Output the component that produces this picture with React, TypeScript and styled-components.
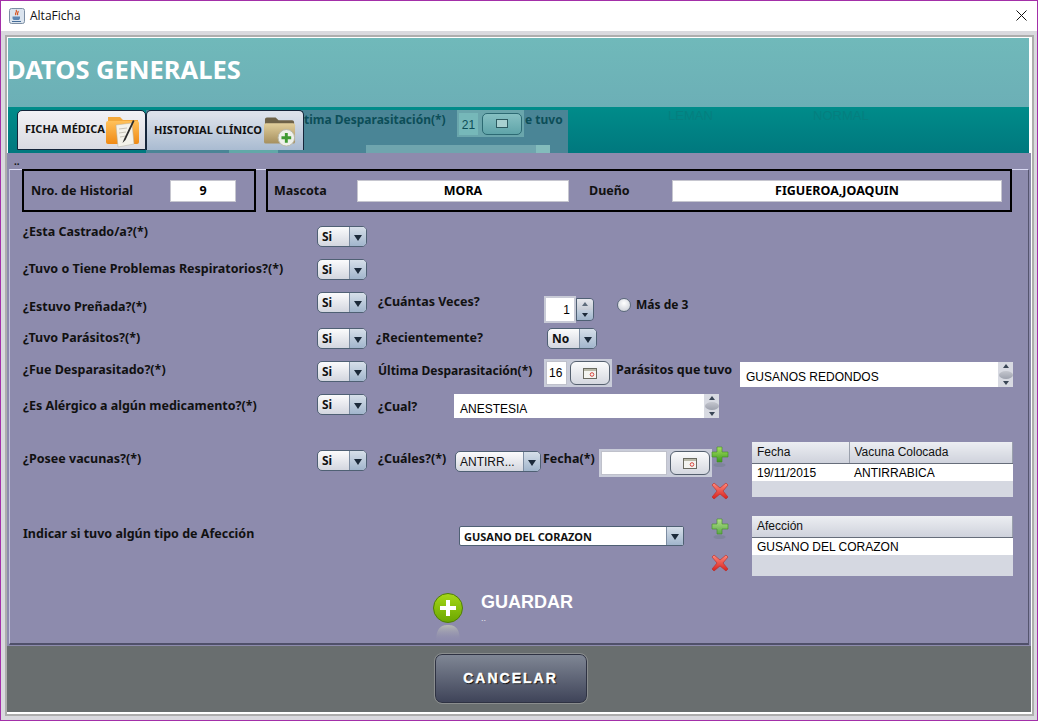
import React from 'react';
import styled, { createGlobalStyle } from 'styled-components';

const GlobalStyle = createGlobalStyle`
  html, body {
    margin: 0;
    padding: 0;
    width: 1038px;
    height: 721px;
    overflow: hidden;
    background: #fff;
  }
  * {
    box-sizing: border-box;
  }
`;

const LABEL_FONT = `"Noto Sans", "DejaVu Sans", sans-serif`;
const FIELD_FONT = `"Liberation Sans", Arial, sans-serif`;

const Win = styled.div`
  width: 1038px;
  height: 721px;
  display: flex;
  flex-direction: column;
  border: 1px solid #a32fa8;
  background: #fff;
`;

const TitleBar = styled.div`
  height: 30px;
  flex: none;
  display: flex;
  align-items: center;
  padding: 0 10px 1px 8px;
  gap: 5px;
  background: #fff;
  font: 12px "Open Sans", sans-serif;
  color: #111;
`;

const TitleText = styled.span`
  flex: 1;
`;

const Frame = styled.div`
  flex: 1;
  display: flex;
  flex-direction: column;
  padding: 4px 3px 4px 4px;
  background: #d9d9de;
`;

const FrameInner = styled.div`
  flex: 1;
  display: flex;
  flex-direction: column;
  border: 2px solid #adadad;
  background: #fff;
  padding: 1px 1px 2px 1px;
`;

const Banner = styled.div`
  height: 69px;
  flex: none;
  display: flex;
  align-items: center;
  margin-right: 2px;
  padding-bottom: 8px;
  background: linear-gradient(#70b9ba, #6cafb6);
`;

const BannerTitle = styled.h1`
  margin: 0 0 0 -1px;
  font: bold 25.5px ${LABEL_FONT};
  color: #fff;
`;

const Strip = styled.div`
  position: relative;
  height: 46px;
  flex: none;
  display: flex;
  align-items: flex-start;
  margin-right: 2px;
  padding: 3px 0 0 9px;
  overflow: hidden;
  background: linear-gradient(#008c8a, #00787e);
`;

const GhostPanel = styled.div`
  position: absolute;
  left: 138px;
  top: 3px;
  width: 422px;
  height: 43px;
  background: #4a8596;
`;

const GhostLabel = styled.span<{ $x: number; $y: number }>`
  position: absolute;
  left: ${({ $x }) => $x}px;
  top: ${({ $y }) => $y}px;
  font: bold 12px ${LABEL_FONT};
  color: #0c4e58;
  white-space: nowrap;
`;

const GhostDate = styled.div`
  position: absolute;
  left: 311px;
  top: 0;
  width: 67px;
  height: 27px;
  display: flex;
  align-items: center;
  gap: 4px;
  padding: 0 2px;
  background: #6aa6ac;
  font: 12px ${FIELD_FONT};
  color: #0c4e58;
`;

const GhostDateText = styled.span`
  width: 19px;
  height: 22px;
  line-height: 24px;
  text-align: center;
  background: #76b8b9;
`;

const GhostDateButton = styled.span`
  flex: 1;
  height: 22px;
  display: flex;
  align-items: center;
  justify-content: center;
  border: 1px solid #2c6a73;
  border-radius: 5px;
  background: linear-gradient(#86c0c2, #5fa4a9);
`;

const GhostList = styled.div`
  position: absolute;
  left: 220px;
  top: 35px;
  width: 170px;
  height: 8px;
  background: #6fa5ae;
`;

const GhostScroll = styled.div`
  position: absolute;
  left: 390px;
  top: 35px;
  width: 14px;
  height: 8px;
  background: #83bcbc;
`;

const GhostCombo = styled.div`
  position: absolute;
  left: 83px;
  top: 39px;
  width: 49px;
  height: 4px;
  background: #62a8a8;
`;

const FaintText = styled.span<{ $x: number }>`
  position: absolute;
  left: ${({ $x }) => $x}px;
  top: 1px;
  font: 13px ${FIELD_FONT};
  color: #057f7f;
`;

const Tab = styled.div<{ $active?: boolean; $width: number }>`
  position: relative;
  width: ${({ $width }) => $width}px;
  height: 40px;
  flex: none;
  display: flex;
  align-items: center;
  padding: 0 0 3px 7px;
  border: 1px solid #15253a;
  border-bottom: ${({ $active }) => ($active ? '1px solid #15253a' : 'none')};
  border-radius: 5px 5px 0 0;
  background: ${({ $active }) =>
    $active ? 'linear-gradient(#f2f2f5, #d9dae1)' : 'linear-gradient(#dce1ea 10%, #a9bbd1)'};
  font: bold 11px ${LABEL_FONT};
  color: #111;
`;

const TabIcon = styled.svg<{ $right: number; $top: number }>`
  position: absolute;
  right: ${({ $right }) => $right}px;
  top: ${({ $top }) => $top}px;
`;

const Panel = styled.div`
  flex: 1;
  display: flex;
  flex-direction: column;
  margin-left: -1px;
  padding-left: 2px;
  background: #8d8bad;
`;

const Dots = styled.div`
  height: 16px;
  padding: 2px 0 0 5px;
  font: bold 10px/12px ${LABEL_FONT};
  color: #111;
`;

const Inner = styled.div`
  flex: 1;
  display: flex;
  flex-direction: column;
  margin-right: 2px;
  padding: 0 15px 0 12px;
  border-top: 1px solid #d9d9f2;
  border-left: 1px solid #c4c4dc;
  border-right: 1px solid #55556e;
  border-bottom: 2px solid #50506a;
`;

const TopBoxes = styled.div`
  display: flex;
  gap: 10px;
  height: 44px;
  margin: -1px 0 13px;
`;

const Box = styled.div<{ $width: number; $pl: number }>`
  width: ${({ $width }) => $width}px;
  height: 43px;
  display: flex;
  align-items: center;
  padding: 0 8px 0 ${({ $pl }) => $pl}px;
  border: 2px solid #000;
  background: #8d8bad;
`;

const Row = styled.div<{ $height: number }>`
  height: ${({ $height }) => $height}px;
  flex: none;
  display: flex;
  align-items: flex-start;
  padding-left: 1px;
`;

const Label = styled.span<{ $width?: number; $mt?: number; $ml?: number; $small?: boolean }>`
  flex: none;
  width: ${({ $width }) => ($width ? `${$width}px` : 'auto')};
  margin-top: ${({ $mt }) => $mt ?? 0}px;
  margin-left: ${({ $ml }) => $ml ?? 0}px;
  font: bold ${({ $small }) => ($small ? 12 : 12.5)}px/18px ${LABEL_FONT};
  color: #111;
  white-space: nowrap;
`;

const NameField = styled.div<{ $width: number; $ml?: number }>`
  width: ${({ $width }) => $width}px;
  height: 22px;
  flex: none;
  margin-left: ${({ $ml }) => $ml ?? 0}px;
  display: flex;
  align-items: center;
  justify-content: center;
  border: 1px solid #c6c6cf;
  background: #fff;
  font: bold 12.5px ${LABEL_FONT};
  color: #000;
`;

const ComboBox = styled.div<{ $width: number; $mt?: number; $ml?: number; $plain?: boolean; $flat?: boolean; $height?: number }>`
  width: ${({ $width }) => $width}px;
  height: ${({ $height }) => $height ?? 21}px;
  flex: none;
  margin-top: ${({ $mt }) => $mt ?? 0}px;
  margin-left: ${({ $ml }) => $ml ?? 0}px;
  display: flex;
  overflow: hidden;
  border: 1px solid #4f6074;
  border-radius: ${({ $flat }) => ($flat ? '2px' : '5px')};
  background: ${({ $flat }) => ($flat ? '#fff' : 'linear-gradient(#fbfbfc, #d3d6df)')};
  font: ${({ $plain, $flat }) =>
    $plain ? `12px ${FIELD_FONT}` : `bold ${$flat ? 11 : 12}px ${LABEL_FONT}`};
  color: #111;
`;

const ComboValue = styled.span`
  flex: 1;
  display: flex;
  align-items: center;
  padding-left: 4px;
  white-space: nowrap;
  overflow: hidden;
`;

const ComboArrow = styled.span`
  width: 17px;
  flex: none;
  display: flex;
  align-items: center;
  justify-content: center;
  border-left: 1px solid #7d8da2;
  background: linear-gradient(#d6dfe9, #a1b5cc);
  &::after {
    content: '';
    margin-top: 2px;
    border-left: 4px solid transparent;
    border-right: 4px solid transparent;
    border-top: 6px solid #1c2a3a;
  }
`;

const Spinner = styled.div<{ $mt?: number }>`
  width: 50px;
  height: 27px;
  flex: none;
  margin-top: ${({ $mt }) => $mt ?? 0}px;
  display: flex;
  align-items: center;
`;

const SpinnerValue = styled.div`
  width: 32px;
  height: 27px;
  flex: none;
  display: flex;
  align-items: center;
  justify-content: flex-end;
  padding-right: 4px;
  border: 2px solid #c8cad6;
  background: #fff;
  font: 12px ${FIELD_FONT};
  color: #000;
`;

const SpinnerButtons = styled.div`
  width: 18px;
  height: 23px;
  display: flex;
  flex-direction: column;
  overflow: hidden;
  border: 1px solid #4f6074;
  border-radius: 0 4px 4px 0;
`;

const SpinnerStep = styled.span<{ $down?: boolean }>`
  flex: 1;
  display: flex;
  align-items: center;
  justify-content: center;
  background: ${({ $down }) => ($down ? 'linear-gradient(#c3d0df, #9fb4cb)' : 'linear-gradient(#e8e9ee, #c7ccd6)')};
  &::after {
    content: '';
    border-left: 3px solid transparent;
    border-right: 3px solid transparent;
    border-top: ${({ $down }) => ($down ? '4px solid #1c2a3a' : 'none')};
    border-bottom: ${({ $down }) => ($down ? 'none' : '4px solid #5f6c7c')};
  }
`;

const Radio = styled.span<{ $mt?: number; $ml?: number }>`
  width: 14px;
  height: 14px;
  flex: none;
  margin-top: ${({ $mt }) => $mt ?? 0}px;
  margin-left: ${({ $ml }) => $ml ?? 0}px;
  border: 1px solid #5c6a7c;
  border-radius: 50%;
  background: radial-gradient(circle at 50% 35%, #ffffff, #c5c9d2);
`;

const DateBox = styled.div<{ $width: number; $fieldWidth: number; $mt?: number; $ml?: number }>`
  width: ${({ $width }) => $width}px;
  height: 28px;
  flex: none;
  margin-top: ${({ $mt }) => $mt ?? 0}px;
  margin-left: ${({ $ml }) => $ml ?? 0}px;
  display: grid;
  grid-template-columns: ${({ $fieldWidth }) => $fieldWidth}px 1fr;
  gap: 3px;
  padding: 2px;
  background: #c9ccd9;
`;

const DateField = styled.div`
  display: flex;
  align-items: center;
  padding-left: 2px;
  border: 1px solid #bfc1cb;
  background: #fff;
  font: 12px ${FIELD_FONT};
  color: #000;
`;

const DateButton = styled.div`
  display: flex;
  align-items: center;
  justify-content: center;
  border: 1px solid #55606f;
  border-radius: 6px;
  background: linear-gradient(#fbfbfc, #d5d8e0);
`;

const ListBox = styled.div<{ $width: number; $height: number; $mt?: number; $ml?: number }>`
  width: ${({ $width }) => $width}px;
  height: ${({ $height }) => $height}px;
  flex: none;
  margin-top: ${({ $mt }) => $mt ?? 0}px;
  margin-left: ${({ $ml }) => $ml ?? 0}px;
  display: flex;
  background: #fff;
  font: 12px ${FIELD_FONT};
  color: #000;
`;

const ListText = styled.span`
  flex: 1;
  padding: 8px 0 0 6px;
`;

const ScrollBar = styled.div`
  width: 15px;
  flex: none;
  display: flex;
  flex-direction: column;
  align-items: center;
  justify-content: space-between;
  padding: 2px 0;
  background: #d8dae2;
  &::before {
    content: '';
    border-left: 3px solid transparent;
    border-right: 3px solid transparent;
    border-bottom: 4px solid #3a4656;
  }
  &::after {
    content: '';
    border-left: 3px solid transparent;
    border-right: 3px solid transparent;
    border-top: 4px solid #3a4656;
  }
`;

const ScrollThumb = styled.span`
  width: 14px;
  height: 8px;
  border-radius: 50%;
  background: linear-gradient(#c4c6ce, #9ea2ae);
`;

const ActionColumn = styled.div<{ $ml?: number; $mt: number; $gap: number }>`
  width: 20px;
  flex: none;
  margin-left: ${({ $ml }) => $ml ?? 0}px;
  margin-top: ${({ $mt }) => $mt}px;
  display: flex;
  flex-direction: column;
  align-items: center;
  gap: ${({ $gap }) => $gap}px;
`;

const DataTable = styled.table<{ $ml: number; $height: number }>`
  width: 261px;
  height: ${({ $height }) => $height}px;
  flex: none;
  margin-left: ${({ $ml }) => $ml}px;
  border-collapse: collapse;
  table-layout: fixed;
  background: #d5d8e1;
  font: 12px ${FIELD_FONT};
  color: #111;
`;

const HeadCell = styled.th<{ $width?: number }>`
  width: ${({ $width }) => ($width ? `${$width}px` : 'auto')};
  height: 21px;
  padding: 0 0 0 5px;
  border-bottom: 1px solid #666d7a;
  border-right: 1px solid #9aa0ac;
  background: linear-gradient(#eceef2, #cfd2dc);
  font-weight: normal;
  text-align: left;
`;

const DataCell = styled.td`
  height: 18px;
  padding: 1px 0 0 5px;
  background: #fff;
  color: #000;
`;

const FillCell = styled.td`
  padding: 0;
`;

const SaveRow = styled.div`
  display: flex;
  align-items: flex-start;
  padding-left: 411px;
`;

const SaveIconWrap = styled.div`
  width: 30px;
  height: 49px;
  flex: none;
`;

const SaveText = styled.div`
  margin: -1px 0 0 18px;
  display: flex;
  flex-direction: column;
  font: bold 18px/20px ${FIELD_FONT};
  color: #fff;
`;

const SaveDots = styled.span`
  font: 9px/12px ${FIELD_FONT};
  color: #e8e8f0;
`;

const Footer = styled.div`
  height: 67px;
  flex: none;
  display: flex;
  align-items: flex-start;
  justify-content: center;
  margin-left: -1px;
  padding: 8px 17px 0 0;
  border-top: 1px solid #8d8bad;
  background: #696e6f;
`;

const CancelButton = styled.button`
  width: 152px;
  height: 49px;
  padding: 0 0 2px;
  border: 1px solid #2e3242;
  border-radius: 7px;
  outline: 1px solid #8a8d8e;
  background: linear-gradient(#7f8694, #3f4459);
  font: bold 14px ${FIELD_FONT};
  letter-spacing: 2px;
  color: #fff;
  -webkit-text-stroke: 0.4px #fff;
  text-shadow: 1px 1px 1px #000;
`;

const JavaIcon = () => (
  <svg width="16" height="16" viewBox="0 0 16 16">
    <rect x="0.5" y="0.5" width="15" height="15" rx="2" fill="#dbe4ee" stroke="#7c8ea3" />
    <path d="M7 2c2 2-2 3 0 5M9 3c1 2-2 2 0 4" fill="none" stroke="#d6501c" strokeWidth="1.2" />
    <path d="M3.500 8.500h7.500v1.500c0 1.500-1 2-2 2h-3.500c-1 0-2-.5-2-2z" fill="#5c86b4" />
    <path d="M3 13.500h9" stroke="#456c98" strokeWidth="1" />
  </svg>
);

const CloseIcon = () => (
  <svg width="11" height="11" viewBox="0 0 11 11">
    <path d="M.5.500l10 10M10.500.500l-10 10" stroke="#111" strokeWidth="1" fill="none" />
  </svg>
);

const CalendarIcon = () => (
  <svg width="14" height="11" viewBox="0 0 14 11">
    <rect x="0.5" y="0.5" width="13" height="10" fill="#f4f4f0" stroke="#6a6a60" />
    <rect x="1" y="1" width="12" height="2" fill="#b9b9a8" />
    <circle cx="9" cy="6.500" r="1.800" fill="none" stroke="#d8443c" />
  </svg>
);

const PlusIcon = ({ faded }: { faded?: boolean }) => (
  <svg width="18" height="22" viewBox="0 0 18 22">
    <defs>
      <linearGradient id="plusFill" x1="0" y1="0" x2="0" y2="1">
        <stop offset="0" stopColor="#a8e060" />
        <stop offset="1" stopColor="#3b9a1e" />
      </linearGradient>
      <linearGradient id="plusFaded" x1="0" y1="0" x2="0" y2="1">
        <stop offset="0" stopColor="#b4e08a" />
        <stop offset="1" stopColor="#5aa848" />
      </linearGradient>
    </defs>
    <path
      d="M6 1h5v5h6v5h-6v5H6v-5H1V6h5z"
      fill={faded ? 'url(#plusFaded)' : 'url(#plusFill)'}
      stroke="#3f8f22"
      strokeWidth="0.6"
    />
    <ellipse cx="8.500" cy="19" rx="6" ry="2" fill="#6f7c8a" opacity="0.45" />
  </svg>
);

const RemoveIcon = () => (
  <svg width="18" height="18" viewBox="0 0 18 18">
    <defs>
      <linearGradient id="xFill" x1="0" y1="0" x2="0" y2="1">
        <stop offset="0" stopColor="#ff8a7c" />
        <stop offset="1" stopColor="#d8201c" />
      </linearGradient>
    </defs>
    <path
      d="M3 1l6 5 6-5 2 2-5 6 5 6-2 2-6-5-6 5-2-2 5-6-5-6z"
      fill="url(#xFill)"
      stroke="#b82a24"
      strokeWidth="0.6"
    />
  </svg>
);

const SaveIcon = () => (
  <svg width="30" height="49" viewBox="0 0 30 49">
    <defs>
      <linearGradient id="saveFill" x1="0" y1="0" x2="0" y2="1">
        <stop offset="0" stopColor="#a6d818" />
        <stop offset="1" stopColor="#6aa600" />
      </linearGradient>
      <linearGradient id="saveReflect" x1="0" y1="0" x2="0" y2="1">
        <stop offset="0" stopColor="#c2c6b6" stopOpacity="0.8" />
        <stop offset="1" stopColor="#8d8bad" stopOpacity="0" />
      </linearGradient>
    </defs>
    <circle cx="15" cy="15" r="14.500" fill="url(#saveFill)" stroke="#4f7d08" />
    <path d="M13 7h4v6h6v4h-6v6h-4v-6H7v-4h6z" fill="#fff" />
    <path d="M3 49c0-14 5-17 12-17s12 3 12 17z" fill="url(#saveReflect)" />
  </svg>
);

const MedicalFolderIcon = () => (
  <TabIcon $right={5} $top={3} width="34" height="34" viewBox="0 0 34 34">
    <defs>
      <linearGradient id="orangeFolder" x1="0" y1="0" x2="0" y2="1">
        <stop offset="0" stopColor="#ffc15a" />
        <stop offset="1" stopColor="#f08a14" />
      </linearGradient>
    </defs>
    <path d="M2 3h12l3 3h15v23H2z" fill="#f3a83a" />
    <rect x="0" y="7" width="33" height="23" rx="2" fill="url(#orangeFolder)" />
    <path d="M10 11l16-2 2 21-16 3z" fill="#f4f2ea" stroke="#b5b0a0" strokeWidth="0.5" />
    <path d="M13 15l8-1M13 19l7-1M14 23l6-1" stroke="#c8c4b8" />
    <path d="M27 6l-9 19-1.500 4 3-3 9-19z" fill="#2a2a2a" />
  </TabIcon>
);

const ClinicalFolderIcon = () => (
  <TabIcon $right={6} $top={3} width="33" height="34" viewBox="0 0 34 34">
    <defs>
      <linearGradient id="tanFolder" x1="0" y1="0" x2="0" y2="1">
        <stop offset="0" stopColor="#e2cf9c" />
        <stop offset="1" stopColor="#a58f5e" />
      </linearGradient>
    </defs>
    <path d="M1 5c0-1 1-2 2-2h9l3 3h14c1 0 2 1 2 2v4H1z" fill="#6e6248" />
    <rect x="0" y="9" width="32" height="21" rx="2" fill="url(#tanFolder)" />
    <circle cx="23" cy="24" r="8.500" fill="#eef0ea" stroke="#b8b8a8" />
    <path d="M21.500 19h3v3.500H28v3h-3.500V29h-3v-3.500H18v-3h3.500z" fill="#3f9a32" />
  </TabIcon>
);

const Combo = ({ value, ...rest }: { value: string; $width: number; $mt?: number; $ml?: number; $plain?: boolean; $flat?: boolean; $height?: number }) => (
  <ComboBox {...rest}>
    <ComboValue>{value}</ComboValue>
    <ComboArrow />
  </ComboBox>
);

export default function App() {
  return (
    <>
      <GlobalStyle />
      <Win>
        <TitleBar>
          <JavaIcon />
          <TitleText>AltaFicha</TitleText>
          <CloseIcon />
        </TitleBar>
        <Frame>
          <FrameInner>
            <Banner>
              <BannerTitle>DATOS GENERALES</BannerTitle>
            </Banner>
            <Strip>
              <FaintText $x={660}>LEMAN</FaintText>
              <FaintText $x={805}>NORMAL</FaintText>
              <GhostPanel>
                <GhostLabel $x={158} $y={1}>tima Desparasitación(*)</GhostLabel>
                <GhostLabel $x={379} $y={1}>e tuvo</GhostLabel>
                <GhostDate>
                  <GhostDateText>21</GhostDateText>
                  <GhostDateButton>
                    <svg width="12" height="9" viewBox="0 0 12 9">
                      <rect x="0.5" y="0.5" width="11" height="8" fill="#a8d0d0" stroke="#2c5a60" />
                    </svg>
                  </GhostDateButton>
                </GhostDate>
                <GhostList />
                <GhostScroll />
                <GhostCombo />
              </GhostPanel>
              <Tab $active $width={129}>
                FICHA MÉDICA
                <MedicalFolderIcon />
              </Tab>
              <Tab $width={158}>
                HISTORIAL CLÍNICO
                <ClinicalFolderIcon />
              </Tab>
            </Strip>
            <Panel>
              <Dots>..</Dots>
              <Inner>
                <TopBoxes>
                  <Box $width={234} $pl={7}>
                    <Label $width={139}>Nro. de Historial</Label>
                    <NameField $width={66}>9</NameField>
                  </Box>
                  <Box $width={746} $pl={6}>
                    <Label $width={83}>Mascota</Label>
                    <NameField $width={212}>MORA</NameField>
                    <Label $width={83} $ml={20}>Dueño</Label>
                    <NameField $width={330}>FIGUEROA,JOAQUIN</NameField>
                  </Box>
                </TopBoxes>

                <Row $height={33}>
                  <Label $width={294} $mt={-3}>¿Esta Castrado/a?(*)</Label>
                  <Combo value="Si" $width={50} />
                </Row>
                <Row $height={33}>
                  <Label $width={294} $mt={1}>¿Tuvo o Tiene Problemas Respiratorios?(*)</Label>
                  <Combo value="Si" $width={50} />
                </Row>
                <Row $height={36}>
                  <Label $width={294} $mt={6}>¿Estuvo Preñada?(*)</Label>
                  <Combo value="Si" $width={50} />
                  <Label $width={166} $ml={11} $mt={1}>¿Cuántas Veces?</Label>
                  <Spinner $mt={4}>
                    <SpinnerValue>1</SpinnerValue>
                    <SpinnerButtons>
                      <SpinnerStep />
                      <SpinnerStep $down />
                    </SpinnerButtons>
                  </Spinner>
                  <Radio $ml={23} $mt={6} />
                  <Label $ml={5} $mt={4} $small>Más de 3</Label>
                </Row>
                <Row $height={33}>
                  <Label $width={294} $mt={1}>¿Tuvo Parásitos?(*)</Label>
                  <Combo value="Si" $width={50} />
                  <Label $width={171} $ml={9} $mt={1}>¿Recientemente?</Label>
                  <Combo value="No" $width={50} />
                </Row>
                <Row $height={33}>
                  <Label $width={294} $mt={0}>¿Fue Desparasitado?(*)</Label>
                  <Combo value="Si" $width={50} />
                  <Label $width={166} $ml={11} $mt={1} $small>Última Desparasitación(*)</Label>
                  <DateBox $width={68} $fieldWidth={21} $mt={-2}>
                    <DateField>16</DateField>
                    <DateButton><CalendarIcon /></DateButton>
                  </DateBox>
                  <Label $width={124} $ml={4} $mt={0}>Parásitos que tuvo</Label>
                  <ListBox $width={273} $height={25} $mt={1}>
                    <ListText>GUSANOS REDONDOS</ListText>
                    <ScrollBar><ScrollThumb /></ScrollBar>
                  </ListBox>
                </Row>
                <Row $height={48}>
                  <Label $width={294} $mt={3}>¿Es Alérgico a algún medicamento?(*)</Label>
                  <Combo value="Si" $width={50} />
                  <Label $width={76} $ml={11} $mt={4}>¿Cual?</Label>
                  <ListBox $width={265} $height={24}>
                    <ListText>ANESTESIA</ListText>
                    <ScrollBar><ScrollThumb /></ScrollBar>
                  </ListBox>
                </Row>
                <Row $height={74}>
                  <Label $width={294} $mt={8}>¿Posee vacunas?(*)</Label>
                  <Combo value="Si" $width={50} $mt={8} />
                  <Label $width={77} $ml={11} $mt={8}>¿Cuáles?(*)</Label>
                  <Combo value="ANTIRR..." $width={86} $mt={9} $plain />
                  <Label $width={56} $ml={2} $mt={8}>Fecha(*)</Label>
                  <DateBox $width={113} $fieldWidth={66} $mt={7}>
                    <DateField />
                    <DateButton><CalendarIcon /></DateButton>
                  </DateBox>
                  <ActionColumn $ml={-2} $mt={4} $gap={14}>
                    <PlusIcon />
                    <RemoveIcon />
                  </ActionColumn>
                  <DataTable $ml={22} $height={55}>
                    <thead>
                      <tr>
                        <HeadCell $width={97}>Fecha</HeadCell>
                        <HeadCell>Vacuna Colocada</HeadCell>
                      </tr>
                    </thead>
                    <tbody>
                      <tr>
                        <DataCell>19/11/2015</DataCell>
                        <DataCell>ANTIRRABICA</DataCell>
                      </tr>
                      <tr>
                        <FillCell colSpan={2} />
                      </tr>
                    </tbody>
                  </DataTable>
                </Row>
                <Row $height={77}>
                  <Label $width={436} $mt={9}>Indicar si tuvo algún tipo de Afección</Label>
                  <Combo value="GUSANO DEL CORAZON" $width={225} $height={20} $mt={10} $flat />
                  <ActionColumn $ml={26} $mt={2} $gap={14}>
                    <PlusIcon faded />
                    <RemoveIcon />
                  </ActionColumn>
                  <DataTable $ml={22} $height={60}>
                    <thead>
                      <tr>
                        <HeadCell>Afección</HeadCell>
                      </tr>
                    </thead>
                    <tbody>
                      <tr>
                        <DataCell>GUSANO DEL CORAZON</DataCell>
                      </tr>
                      <tr>
                        <FillCell />
                      </tr>
                    </tbody>
                  </DataTable>
                </Row>
                <SaveRow>
                  <SaveIconWrap><SaveIcon /></SaveIconWrap>
                  <SaveText>
                    GUARDAR
                    <SaveDots>..</SaveDots>
                  </SaveText>
                </SaveRow>
              </Inner>
            </Panel>
            <Footer>
              <CancelButton>CANCELAR</CancelButton>
            </Footer>
          </FrameInner>
        </Frame>
      </Win>
    </>
  );
}
